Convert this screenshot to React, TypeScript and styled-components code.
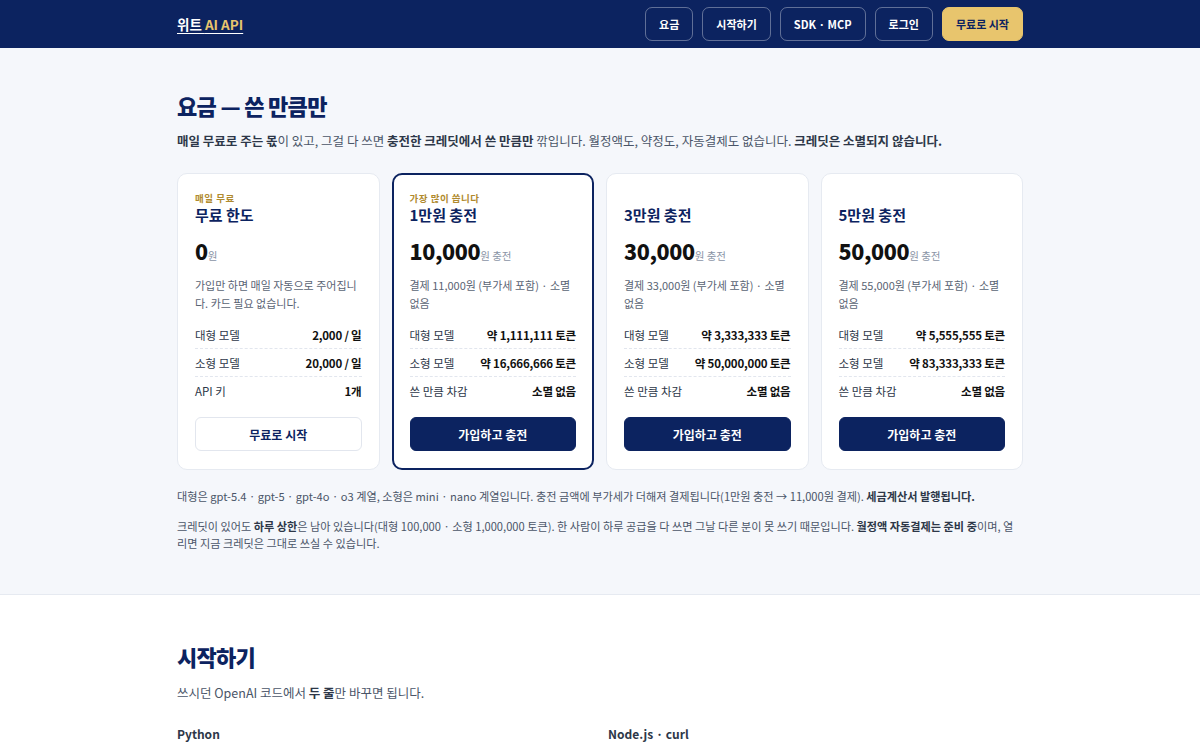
import React from 'react'
import styled, { createGlobalStyle } from 'styled-components'

const navy = '#0c2360'
const gold = '#e8c56d'

const GlobalStyle = createGlobalStyle`
  body {
    margin: 0;
    background: #ffffff;
    font-family: 'Noto Sans CJK KR', 'Noto Sans', sans-serif;
    color: #1a202c;
  }
  * { box-sizing: border-box; }
`

const Header = styled.header`
  background: ${navy};
  height: 48px;
`

const Inner = styled.div`
  width: 846px;
  margin: 0 auto;
`

const HeaderInner = styled(Inner)`
  height: 100%;
  display: flex;
  align-items: center;
  justify-content: space-between;
`

const Logo = styled.a`
  color: #ffffff;
  font-size: 13.5px;
  font-weight: 700;
  text-decoration: underline;
  text-underline-offset: 3px;
  span { color: ${gold}; }
`

const Nav = styled.nav`
  display: flex;
  gap: 9px;
`

const NavButton = styled.a<{ $primary?: boolean }>`
  height: 34px;
  padding: 0 13px;
  display: flex;
  align-items: center;
  border-radius: 7px;
  font-size: 11px;
  font-weight: 700;
  color: ${({ $primary }) => ($primary ? navy : '#ffffff')};
  background: ${({ $primary }) => ($primary ? gold : 'transparent')};
  border: 1px solid ${({ $primary }) => ($primary ? gold : 'rgba(255,255,255,0.35)')};
`

const PricingSection = styled.section`
  background: #f5f7fb;
  border-bottom: 1px solid #e6eaf1;
  padding: 42px 0 42px;
`

const Title = styled.h2`
  margin: 0;
  font-size: 22px;
  font-weight: 800;
  letter-spacing: -0.7px;
  color: ${navy};
  line-height: 30px;
`

const Lead = styled.p`
  margin: 11px 0 0;
  font-size: 12.5px;
  color: #4a5568;
  b { color: #2d3748; font-weight: 700; }
`

const Cards = styled.div`
  margin-top: 23px;
  display: grid;
  grid-template-columns: repeat(4, 1fr);
  gap: 12px;
`

const Card = styled.div<{ $featured?: boolean }>`
  background: #ffffff;
  border: ${({ $featured }) => ($featured ? `2px solid ${navy}` : '1px solid #e6eaf1')};
  border-radius: 10px;
  padding: ${({ $featured }) => ($featured ? '16px 16px 17px' : '17px 17px 18px')};
  display: flex;
  flex-direction: column;
`

const Tag = styled.div`
  font-size: 9.5px;
  font-weight: 700;
  color: #b08a2e;
  height: 13px;
  letter-spacing: 0.5px;
`

const CardTitle = styled.div`
  font-size: 15px;
  font-weight: 700;
  color: ${navy};
  line-height: 22px;
`

const Price = styled.div`
  margin-top: 10px;
  display: flex;
  align-items: baseline;
  line-height: 30px;
  strong { font-size: 21.5px; font-weight: 800; color: #111; letter-spacing: -0.4px; }
  span { font-size: 10.5px; color: #8a94a6; }
`

const Desc = styled.div`
  margin-top: 5px;
  font-size: 11px;
  color: #5a6474;
  line-height: 18px;
  min-height: 36px;
`

const Rows = styled.div`
  margin-top: 9px;
`

const Row = styled.div<{ $last?: boolean }>`
  display: flex;
  justify-content: space-between;
  align-items: center;
  height: 28px;
  font-size: 11.5px;
  color: #2d3748;
  border-bottom: ${({ $last }) => ($last ? 'none' : '1px dashed #e2e6ee')};
  b { font-weight: 700; color: #111; font-size: 11.5px; letter-spacing: -0.2px; }
`

const CardButton = styled.a<{ $outline?: boolean }>`
  margin-top: 12px;
  height: 34px;
  border-radius: 6px;
  display: flex;
  align-items: center;
  justify-content: center;
  font-size: 12px;
  font-weight: 700;
  color: ${({ $outline }) => ($outline ? navy : '#ffffff')};
  background: ${({ $outline }) => ($outline ? '#ffffff' : navy)};
  border: 1px solid ${({ $outline }) => ($outline ? '#e2e6ee' : navy)};
`

const Note = styled.p`
  margin: 18px 0 0;
  font-size: 11.15px;
  color: #4a5568;
  line-height: 17px;
  & + & { margin-top: 13px; }
  b { color: #2d3748; font-weight: 700; }
`

const StartSection = styled.section`
  background: #ffffff;
  padding: 46px 0 0;
`

const SubLead = styled.p`
  margin: 12px 0 0;
  font-size: 12.5px;
  color: #4a5568;
  b { color: #2d3748; font-weight: 700; }
`

const CodeGrid = styled.div`
  margin-top: 23px;
  display: grid;
  grid-template-columns: 1fr 1fr;
  gap: 16px;
`

const CodeLabel = styled.div`
  font-size: 12px;
  font-weight: 700;
  color: #2d3748;
`

type Plan = {
  tag?: string
  title: string
  amount: string
  unit: string
  desc: string
  rows: [string, string][]
  button: string
  featured?: boolean
  outline?: boolean
}

const plans: Plan[] = [
  {
    tag: '매일 무료',
    title: '무료 한도',
    amount: '0',
    unit: '원',
    desc: '가입만 하면 매일 자동으로 주어집니다. 카드 필요 없습니다.',
    rows: [
      ['대형 모델', '2,000 / 일'],
      ['소형 모델', '20,000 / 일'],
      ['API 키', '1개'],
    ],
    button: '무료로 시작',
    outline: true,
  },
  {
    tag: '가장 많이 씁니다',
    title: '1만원 충전',
    amount: '10,000',
    unit: '원 충전',
    desc: '결제 11,000원 (부가세 포함) · 소멸 없음',
    rows: [
      ['대형 모델', '약 1,111,111 토큰'],
      ['소형 모델', '약 16,666,666 토큰'],
      ['쓴 만큼 차감', '소멸 없음'],
    ],
    button: '가입하고 충전',
    featured: true,
  },
  {
    title: '3만원 충전',
    amount: '30,000',
    unit: '원 충전',
    desc: '결제 33,000원 (부가세 포함) · 소멸 없음',
    rows: [
      ['대형 모델', '약 3,333,333 토큰'],
      ['소형 모델', '약 50,000,000 토큰'],
      ['쓴 만큼 차감', '소멸 없음'],
    ],
    button: '가입하고 충전',
  },
  {
    title: '5만원 충전',
    amount: '50,000',
    unit: '원 충전',
    desc: '결제 55,000원 (부가세 포함) · 소멸 없음',
    rows: [
      ['대형 모델', '약 5,555,555 토큰'],
      ['소형 모델', '약 83,333,333 토큰'],
      ['쓴 만큼 차감', '소멸 없음'],
    ],
    button: '가입하고 충전',
  },
]

export default function App() {
  return (
    <>
      <GlobalStyle />
      <Header>
        <HeaderInner>
          <Logo>
            위트 <span>AI API</span>
          </Logo>
          <Nav>
            <NavButton>요금</NavButton>
            <NavButton>시작하기</NavButton>
            <NavButton>SDK · MCP</NavButton>
            <NavButton>로그인</NavButton>
            <NavButton $primary>무료로 시작</NavButton>
          </Nav>
        </HeaderInner>
      </Header>

      <PricingSection>
        <Inner>
          <Title>요금 — 쓴 만큼만</Title>
          <Lead>
            <b>매일 무료로 주는 몫</b>이 있고, 그걸 다 쓰면 <b>충전한 크레딧에서 쓴 만큼만</b> 깎입니다. 월정액도, 약정도,
            자동결제도 없습니다. <b>크레딧은 소멸되지 않습니다.</b>
          </Lead>
          <Cards>
            {plans.map((p) => (
              <Card key={p.title} $featured={p.featured}>
                <Tag>{p.tag}</Tag>
                <CardTitle>{p.title}</CardTitle>
                <Price>
                  <strong>{p.amount}</strong>
                  <span>{p.unit}</span>
                </Price>
                <Desc>{p.desc}</Desc>
                <Rows>
                  {p.rows.map(([k, v], i) => (
                    <Row key={k} $last={i === p.rows.length - 1}>
                      <span>{k}</span>
                      <b>{v}</b>
                    </Row>
                  ))}
                </Rows>
                <CardButton $outline={p.outline}>{p.button}</CardButton>
              </Card>
            ))}
          </Cards>
          <Note>
            대형은 gpt-5.4 · gpt-5 · gpt-4o · o3 계열, 소형은 mini · nano 계열입니다. 충전 금액에 부가세가 더해져
            결제됩니다(1만원 충전 → 11,000원 결제). <b>세금계산서 발행됩니다.</b>
          </Note>
          <Note>
            크레딧이 있어도 <b>하루 상한</b>은 남아 있습니다(대형 100,000 · 소형 1,000,000 토큰). 한 사람이 하루 공급을 다
            쓰면 그날 다른 분이 못 쓰기 때문입니다. <b>월정액 자동결제는 준비 중</b>이며, 열리면 지금 크레딧은 그대로 쓰실 수
            있습니다.
          </Note>
        </Inner>
      </PricingSection>

      <StartSection>
        <Inner>
          <Title>시작하기</Title>
          <SubLead>
            쓰시던 OpenAI 코드에서 <b>두 줄</b>만 바꾸면 됩니다.
          </SubLead>
          <CodeGrid>
            <CodeLabel>Python</CodeLabel>
            <CodeLabel>Node.js · curl</CodeLabel>
          </CodeGrid>
        </Inner>
      </StartSection>
    </>
  )
}
